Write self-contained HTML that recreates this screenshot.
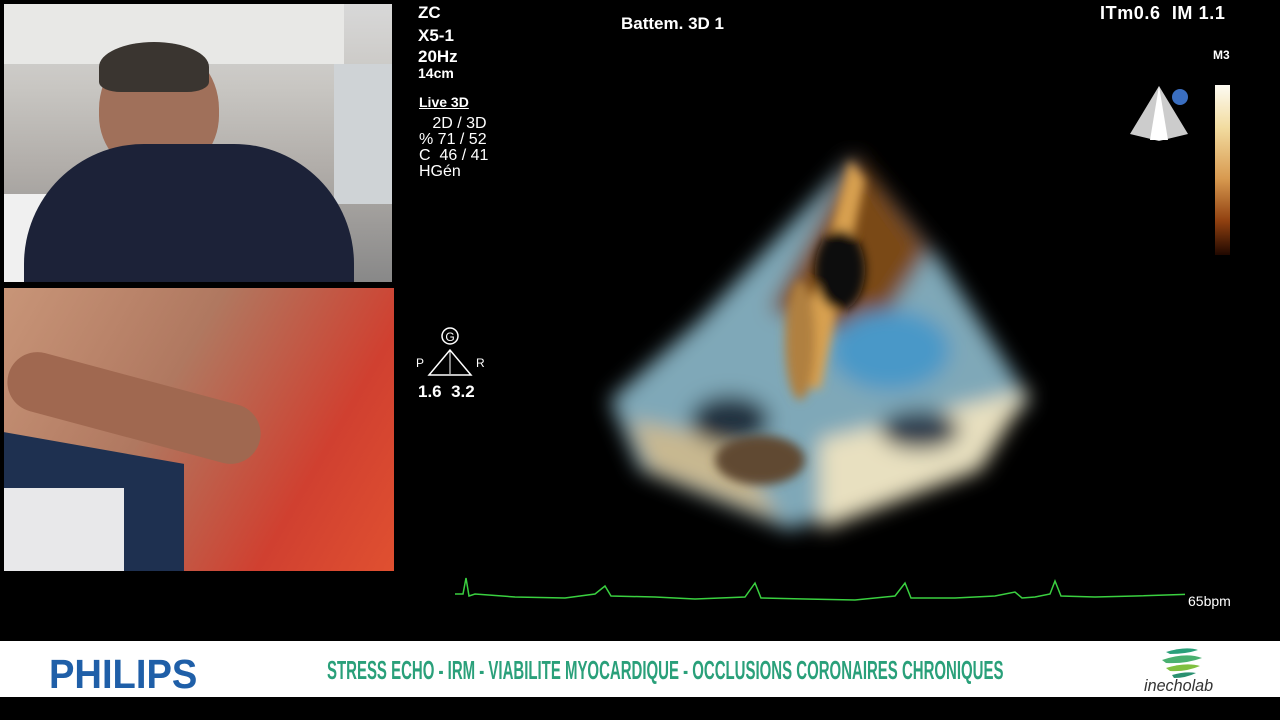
<!DOCTYPE html>
<html><head><meta charset="utf-8"><style>
body{margin:0;width:1280px;height:720px;background:#000;overflow:hidden;position:relative;font-family:"Liberation Sans",sans-serif;color:#fff}
.t{position:absolute;font-weight:bold;white-space:pre;line-height:1}
.n{position:absolute;white-space:pre;line-height:16px;font-size:16px}
</style></head><body>
<div style="position:absolute;left:4px;top:4px;width:388px;height:278px;background:linear-gradient(180deg,#d8d8d8 0%,#c8c6c2 30%,#b0aca8 60%,#888 100%);overflow:hidden">
 <div style="position:absolute;left:0;top:0;width:340px;height:60px;background:#e8e8e6"></div>
 <div style="position:absolute;left:0;top:190px;width:60px;height:90px;background:#f0f0f0"></div>
 <div style="position:absolute;left:330px;top:60px;width:58px;height:140px;background:#cfd3d6"></div>
 <div style="position:absolute;left:95px;top:40px;width:120px;height:130px;border-radius:50% 50% 45% 45%;background:#a0705a"></div>
 <div style="position:absolute;left:95px;top:38px;width:110px;height:50px;border-radius:50% 50% 20% 20%;background:#3a3530"></div>
 <div style="position:absolute;left:20px;top:140px;width:330px;height:150px;border-radius:120px 120px 0 0;background:#1c2238"></div>
</div>
<div style="position:absolute;left:4px;top:288px;width:390px;height:283px;background:linear-gradient(120deg,#c89578 0%,#b07860 40%,#d04030 75%,#e05030 100%);overflow:hidden">
 <div style="position:absolute;left:0;top:160px;width:180px;height:130px;background:#1e3050;transform:skewY(10deg)"></div>
 <div style="position:absolute;left:0;top:200px;width:120px;height:90px;background:#e8e8ea"></div>
 <div style="position:absolute;left:0;top:90px;width:260px;height:60px;background:#a06850;border-radius:30px;transform:rotate(15deg)"></div>
</div>
<div class="t" style="left:418px;top:4px;font-size:17px">ZC</div>
<div class="t" style="left:418px;top:27px;font-size:17px">X5-1</div>
<div class="t" style="left:418px;top:48px;font-size:17px">20Hz</div>
<div class="t" style="left:418px;top:66px;font-size:14px">14cm</div>
<div class="t" style="left:419px;top:95px;font-size:14px;text-decoration:underline">Live 3D</div>
<div class="n" style="left:419px;top:116px">   2D / 3D
% 71 / 52
C  46 / 41
HGén</div>
<div class="t" style="left:621px;top:15px;font-size:17px">Battem. 3D 1</div>
<div class="t" style="left:1100px;top:4px;font-size:18px;letter-spacing:0.6px">ITm0.6  IM 1.1</div>
<div class="t" style="left:1213px;top:49px;font-size:12px">M3</div>
<svg style="position:absolute;left:1128px;top:84px" width="64" height="60"><polygon points="31,2 2,50 31,57 60,50" fill="#ccc"/><polygon points="31,2 22,56 40,56" fill="#fff"/><circle cx="52" cy="13" r="8" fill="#3a6ec0"/></svg>
<div style="position:absolute;left:1215px;top:85px;width:15px;height:170px;background:linear-gradient(#fdfbf2,#f2dca0 25%,#d89a50 55%,#904010 80%,#200800)"></div>
<svg style="position:absolute;left:414px;top:326px" width="80" height="50"><circle cx="36" cy="10" r="8" fill="none" stroke="#fff" stroke-width="1.5"/><text x="36" y="15" fill="#fff" font-size="12" text-anchor="middle" font-family="Liberation Sans">G</text><polygon points="36,24 15,49 57,49" fill="none" stroke="#fff" stroke-width="1.5"/><line x1="36" y1="25" x2="36" y2="48" stroke="#fff"/><text x="2" y="41" fill="#fff" font-size="12" font-family="Liberation Sans">P</text><text x="62" y="41" fill="#fff" font-size="12" font-family="Liberation Sans">R</text></svg>
<div class="t" style="left:418px;top:383px;font-size:17px">1.6  3.2</div>
<svg style="position:absolute;left:590px;top:140px" width="470" height="410">
<defs><filter id="b"><feGaussianBlur stdDeviation="10"/></filter><filter id="s"><feGaussianBlur stdDeviation="5"/></filter></defs>
<g filter="url(#b)">
<polygon points="265,15 350,120 440,260 380,320 200,390 50,330 20,260 110,180" fill="#7fa8b8"/>
<polygon points="265,15 340,110 280,200 180,170" fill="#7a4a18"/>
<polygon points="230,300 440,250 390,330 230,390" fill="#e8e0c0"/>
<polygon points="40,280 140,300 190,380 60,330" fill="#c8b890"/>
<ellipse cx="300" cy="210" rx="60" ry="40" fill="#4a98c8"/>
<ellipse cx="140" cy="280" rx="40" ry="25" fill="#203040"/>
<ellipse cx="330" cy="290" rx="40" ry="20" fill="#304050"/>
</g>
<g filter="url(#s)"><polygon points="260,20 275,40 230,250 200,240" fill="#d8a050"/><ellipse cx="250" cy="130" rx="25" ry="40" fill="#101010"/><ellipse cx="170" cy="320" rx="45" ry="25" fill="#604830"/><ellipse cx="210" cy="200" rx="15" ry="60" fill="#b08040"/></g>
</svg>
<svg style="position:absolute;left:455px;top:572px" width="730" height="40"><polyline fill="none" stroke="#3ad040" stroke-width="1.5" points="0,22 8,22 11,6 14,24 20,22 60,25 110,26 140,22 150,14 156,24 200,25 240,27 290,25 300,11 306,26 350,27 400,28 440,24 450,11 456,26 500,26 540,24 560,20 567,26 580,25 595,22 600,9 606,24 640,25 680,24 740,22"/></svg>
<div style="position:absolute;left:1188px;top:593px;font-size:14px">65bpm</div>
<div style="position:absolute;left:0;top:641px;width:1280px;height:56px;background:#fff"></div>
<div class="t" style="left:49px;top:654px;font-size:41px;color:#1f5fa8;transform:scaleX(0.93);transform-origin:left">PHILIPS</div>
<div class="t" style="left:327px;top:657px;font-size:26px;color:#2aa07a;transform:scaleX(0.576);transform-origin:left">STRESS ECHO - IRM - VIABILITE MYOCARDIQUE - OCCLUSIONS CORONAIRES CHRONIQUES</div>
<svg style="position:absolute;left:1158px;top:644px" width="50" height="36"><path d="M8,8 Q28,2 40,6 Q28,10 12,10Z" fill="#2aa07a"/><path d="M4,16 Q28,8 44,14 Q28,20 8,19Z" fill="#4ab070"/><path d="M8,24 Q28,18 42,22 Q28,28 12,27Z" fill="#80c040"/><path d="M14,31 Q28,27 38,29 Q28,34 16,34Z" fill="#2a9070"/></svg>
<div style="position:absolute;left:1144px;top:676px;font-size:17px;font-style:italic;color:#333;transform:scaleX(0.95);transform-origin:left">inecholab</div>
</body></html>
